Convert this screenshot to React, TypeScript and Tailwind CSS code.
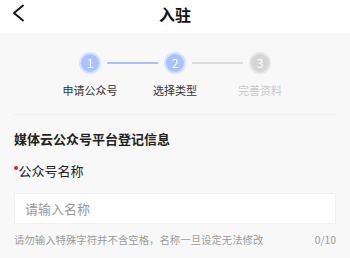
const steps = [
  { n: 1, label: "申请公众号", done: true },
  { n: 2, label: "选择类型", done: true },
  { n: 3, label: "完善资料", done: false },
];

function StepDot({ n, done }: { n: number; done: boolean }) {
  return (
    <div
      className={
        done
          ? "grid h-[22px] w-[22px] place-items-center rounded-full border-2 border-[#d6e2fd] bg-[#a9c2fb]"
          : "grid h-[22px] w-[22px] place-items-center rounded-full border-2 border-[#e6e6e6] bg-[#d5d5d5]"
      }
    >
      <span className="text-[12px] leading-none text-white">{n}</span>
    </div>
  );
}

export default function App() {
  return (
    <div
      className="flex h-[258px] w-[350px] flex-col overflow-hidden bg-[#f8f8f8]"
      style={{ fontFamily: '"Noto Sans CJK SC", "Noto Sans", sans-serif' }}
    >
      {/* Header */}
      <header className="relative flex h-[33px] flex-none items-center justify-center bg-white">
        <svg
          className="absolute left-[12px] top-[4px]"
          width="13"
          height="18"
          viewBox="0 0 13 18"
          fill="none"
          stroke="#111"
          strokeWidth="1.9"
          strokeLinecap="round"
          strokeLinejoin="round"
        >
          <polyline points="11,1.5 2,9 11,16.5" />
        </svg>
        <h1 className="-mt-[5px] text-[16px] font-bold leading-[20px] text-[#111]">入驻</h1>
      </header>

      {/* Steps */}
      <div className="flex flex-col items-center pt-[19px]">
        <div className="flex items-center">
          <StepDot n={1} done />
          <div className="mx-[6px] h-[2px] w-[51px] bg-[#a9c2fb]" />
          <StepDot n={2} done />
          <div className="mx-[6px] h-[2px] w-[51px] bg-[#dcdcdc]" />
          <StepDot n={3} done={false} />
        </div>
        <div className="mt-[8px] flex">
          {steps.map((s) => (
            <div
              key={s.n}
              className={
                s.done
                  ? "w-[85px] text-center text-[11px] leading-[16px] text-[#333]"
                  : "w-[85px] text-center text-[11px] leading-[16px] text-[#c8c8c8]"
              }
            >
              {s.label}
            </div>
          ))}
        </div>
      </div>

      <div className="mx-[14px] mt-[16px] h-px bg-[#efefef]" />

      {/* Form */}
      <div className="px-[14px]">
        <h2 className="mt-[15px] text-[13px] font-bold leading-[18px] text-[#222]">媒体云公众号平台登记信息</h2>
        <div className="mt-[14px] flex items-center text-[13px] leading-[18px] text-[#222]">
          <span className="mr-px mb-[6px] h-[3.5px] w-[3.5px] rounded-full bg-[#e02020]" />
          公众号名称
        </div>
        <div className="mt-[13px] flex h-[31px] items-center border border-[#f0f0f0] bg-white px-[10px]">
          <span className="text-[13px] text-[#999]">请输入名称</span>
        </div>
        <div className="mt-[9px] flex items-center justify-between text-[10.4px] leading-[14px] text-[#9a9a9a]">
          <span>请勿输入特殊字符并不含空格，名称一旦设定无法修改</span>
          <span>0/10</span>
        </div>
      </div>
    </div>
  );
}
